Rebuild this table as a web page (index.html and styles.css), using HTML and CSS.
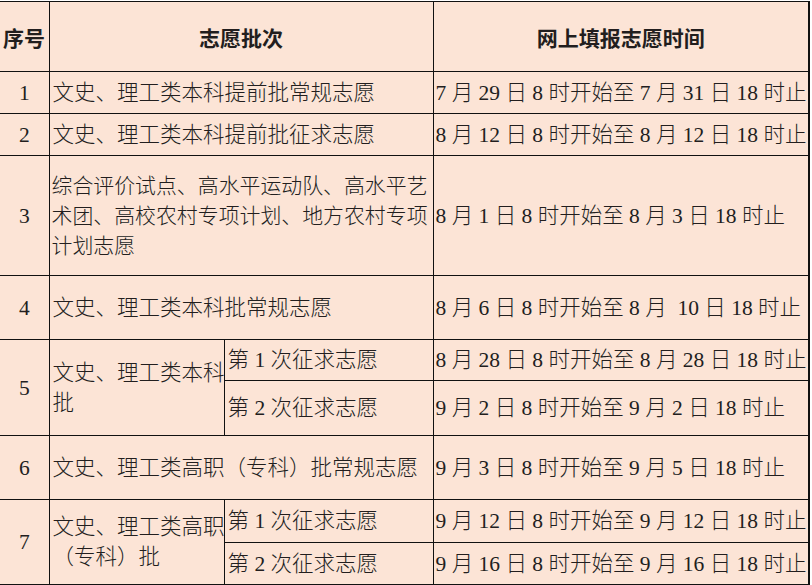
FILE: index.html
```html
<!DOCTYPE html>
<html lang="zh-CN">
<head>
<meta charset="utf-8">
<title>志愿填报时间</title>
<link rel="stylesheet" href="styles.css">
</head>
<body>
<table class="schedule">
  <colgroup>
    <col class="c-no">
    <col class="c-batch">
    <col class="c-sub">
    <col class="c-time">
  </colgroup>
  <tr class="h-head">
    <th class="no">序号</th>
    <th colspan="2">志愿批次</th>
    <th>网上填报志愿时间</th>
  </tr>
  <tr class="h-42">
    <td class="no">1</td>
    <td colspan="2">文史、理工类本科提前批常规志愿</td>
    <td class="time">7 月 29 日 8 时开始至 7 月 31 日 18 时止</td>
  </tr>
  <tr class="h-42">
    <td class="no">2</td>
    <td colspan="2">文史、理工类本科提前批征求志愿</td>
    <td class="time">8 月 12 日 8 时开始至 8 月 12 日 18 时止</td>
  </tr>
  <tr class="h-120">
    <td class="no">3</td>
    <td colspan="2" class="multi compact">综合评价试点、高水平运动队、高水平艺<br>术团、高校农村专项计划、地方农村专项<br>计划志愿</td>
    <td class="time">8 月 1 日 8 时开始至 8 月 3 日 18 时止</td>
  </tr>
  <tr class="h-64">
    <td class="no">4</td>
    <td colspan="2">文史、理工类本科批常规志愿</td>
    <td class="time">8 月 6 日 8 时开始至 8 月 &nbsp;10 日 18 时止</td>
  </tr>
  <tr class="h-41">
    <td class="no" rowspan="2">5</td>
    <td rowspan="2" class="multi">文史、理工类本科<br>批</td>
    <td class="sub">第 1 次征求志愿</td>
    <td class="time">8 月 28 日 8 时开始至 8 月 28 日 18 时止</td>
  </tr>
  <tr class="h-55">
    <td class="sub">第 2 次征求志愿</td>
    <td class="time">9 月 2 日 8 时开始至 9 月 2 日 18 时止</td>
  </tr>
  <tr class="h-64">
    <td class="no">6</td>
    <td colspan="2">文史、理工类高职（专科）批常规志愿</td>
    <td class="time">9 月 3 日 8 时开始至 9 月 5 日 18 时止</td>
  </tr>
  <tr class="h-43">
    <td class="no" rowspan="2">7</td>
    <td rowspan="2" class="multi">文史、理工类高职<br>（专科）批</td>
    <td class="sub">第 1 次征求志愿</td>
    <td class="time">9 月 12 日 8 时开始至 9 月 12 日 18 时止</td>
  </tr>
  <tr class="h-42">
    <td class="sub">第 2 次征求志愿</td>
    <td class="time">9 月 16 日 8 时开始至 9 月 16 日 18 时止</td>
  </tr>
</table>
</body>
</html>
```
FILE: styles.css
```css
html, body {
  margin: 0;
  padding: 0;
  background: #ffffff;
}

body {
  overflow: hidden;
  height: 585px;
  padding-top: 1px;
}

.schedule {
  border-collapse: collapse;
  table-layout: fixed;
  width: 809px;
  background: #fce4d6;
  color: #221e1e;
  font-family: "Liberation Serif", "Noto Sans CJK SC", serif;
  font-size: 21.5px;
  font-weight: 300;
  line-height: 30px;
}

.c-no { width: 49px; }
.c-batch { width: 175px; }
.c-sub { width: 209px; }
.c-time { width: 376px; }

.schedule th,
.schedule td {
  border: 1px solid #111;
  padding: 0 0 0 3px;
  vertical-align: middle;
  text-align: left;
  white-space: nowrap;
  overflow: hidden;
}

.schedule tr > :first-child {
  border-left: none;
}

.schedule tr > :last-child {
  border-right: 2px solid #111;
}

.schedule th {
  font-family: "Noto Sans CJK SC", sans-serif;
  font-weight: 700;
  font-size: 21px;
  text-align: center;
  padding: 0;
}

.schedule .no {
  text-align: center;
  padding: 0;
}

.schedule th.no {
  text-align: left;
  padding-left: 3px;
}

.schedule .compact {
  font-size: 20.9px;
  padding-left: 2px;
}

.schedule .time {
  padding-left: 2px;
}

.h-head { height: 70px; }
.h-41 { height: 41px; }
.h-42 { height: 42px; }
.h-43 { height: 43px; }
.h-55 { height: 55px; }
.h-64 { height: 64px; }
.h-120 { height: 120px; }
```
